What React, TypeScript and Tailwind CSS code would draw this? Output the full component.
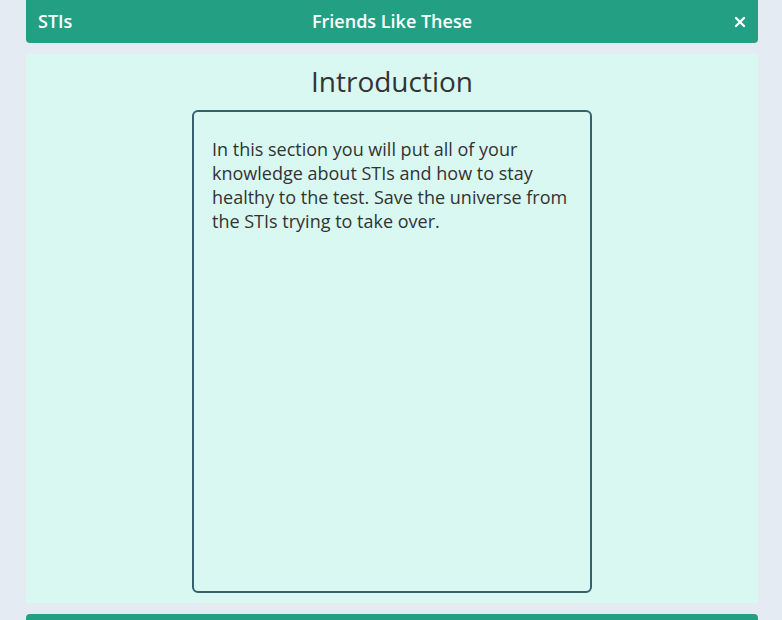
import { X } from "lucide-react";

export default function App() {
  return (
    <div className="min-h-[620px] h-[620px] overflow-hidden bg-[#e4ebf2] pl-[26px] pr-[24px] font-['Open_Sans',sans-serif]">
      <header className="relative flex h-[43px] items-center justify-between rounded-b-[4px] bg-[#23a084] px-3 text-white">
        <span className="text-[18px] font-semibold">STIs</span>
        <h1 className="absolute left-1/2 -translate-x-1/2 text-[18px] font-semibold">Friends Like These</h1>
        <X className="-mr-[2px] h-[16px] w-[16px]" strokeWidth={3.4} />
      </header>

      <main className="mt-[11px] flex flex-col items-center bg-[#d9f8f2] pt-[7px] pb-[10px]">
        <h2 className="mb-[9px] text-[28px] leading-[40px] text-[#333]">Introduction</h2>
        <div className="h-[483px] w-[400px] rounded-[6px] border-2 border-[#37606e] px-[18px] pt-[25px] text-[18px] leading-[24px] text-[#333]">
          In this section you will put all of your knowledge about STIs and how to stay healthy to the test. Save the
          universe from the STIs trying to take over.
        </div>
      </main>

      <div className="mt-[11px] h-10 rounded-t-[4px] bg-[#23a084]" />
    </div>
  );
}
